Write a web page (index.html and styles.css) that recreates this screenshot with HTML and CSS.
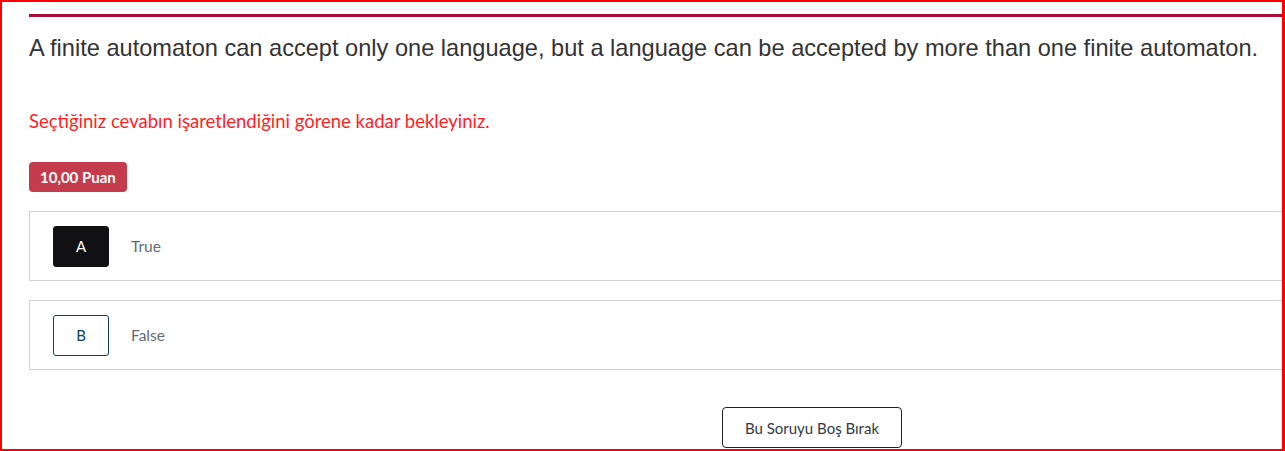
FILE: index.html
```html
<!DOCTYPE html>
<html lang="tr">
<head>
<meta charset="utf-8">
<title>Soru</title>
<link rel="stylesheet" href="styles.css">
</head>
<body>
<div class="frame">
  <div class="rule"></div>
  <p class="question">A finite automaton can accept only one language, but a language can be accepted by more than one finite automaton.</p>
  <p class="notice">Seçtiğiniz cevabın işaretlendiğini görene kadar bekleyiniz.</p>
  <span class="badge">10,00 Puan</span>
  <div class="options">
    <div class="option">
      <span class="letter letter-selected">A</span>
      <span class="option-text">True</span>
    </div>
    <div class="option">
      <span class="letter">B</span>
      <span class="option-text">False</span>
    </div>
  </div>
  <div class="actions">
    <button class="skip" type="button">Bu Soruyu Boş Bırak</button>
  </div>
</div>
</body>
</html>
```

FILE: styles.css
```css
html, body {
  margin: 0;
  padding: 0;
  background: #fff;
}

.frame {
  box-sizing: border-box;
  width: 1285px;
  height: 451px;
  border: 2px solid #ff0000;
  border-right-width: 3px;
  padding: 12px 0 0 27px;
  overflow: hidden;
  font-family: "Lato", "Noto Sans", sans-serif;
}

.rule {
  height: 3px;
  background: #a8103a;
}

.question {
  margin: 13px 0 0 0;
  font-family: "Liberation Sans", Arial, sans-serif;
  font-size: 23.6px;
  line-height: 36px;
  color: #333333;
  white-space: nowrap;
}

.notice {
  margin: 43px 0 0 0;
  font-size: 18.5px;
  line-height: 24px;
  color: #ff1f1f;
}

.badge {
  display: inline-flex;
  align-items: center;
  margin-top: 29px;
  height: 30px;
  padding: 0 11px;
  border-radius: 4px;
  background: #c43b4b;
  color: #fff;
  font-size: 15px;
  font-weight: 700;
}

.options {
  display: flex;
  flex-direction: column;
  gap: 19px;
  margin-top: 19px;
  width: calc(100% + 40px);
}

.option {
  box-sizing: border-box;
  height: 70px;
  display: flex;
  align-items: center;
  gap: 22px;
  padding-left: 23px;
  border: 1px solid #d0d0d0;
}

.letter {
  box-sizing: border-box;
  width: 56px;
  height: 41px;
  display: flex;
  align-items: center;
  justify-content: center;
  border: 1px solid #0e3d5e;
  border-radius: 3px;
  color: #0e3d5e;
  font-size: 15px;
}

.letter-selected {
  background: #111114;
  border-color: #111114;
  color: #fff;
}

.option-text {
  font-size: 15.5px;
  color: #626b73;
}

.actions {
  margin-top: 37px;
  padding-left: 693px;
}

.skip {
  box-sizing: border-box;
  width: 180px;
  height: 41px;
  background: #fff;
  border: 1px solid #222;
  border-radius: 4px;
  font-family: "Lato", "Noto Sans", sans-serif;
  font-size: 15px;
  color: #333a44;
  cursor: pointer;
}
```
